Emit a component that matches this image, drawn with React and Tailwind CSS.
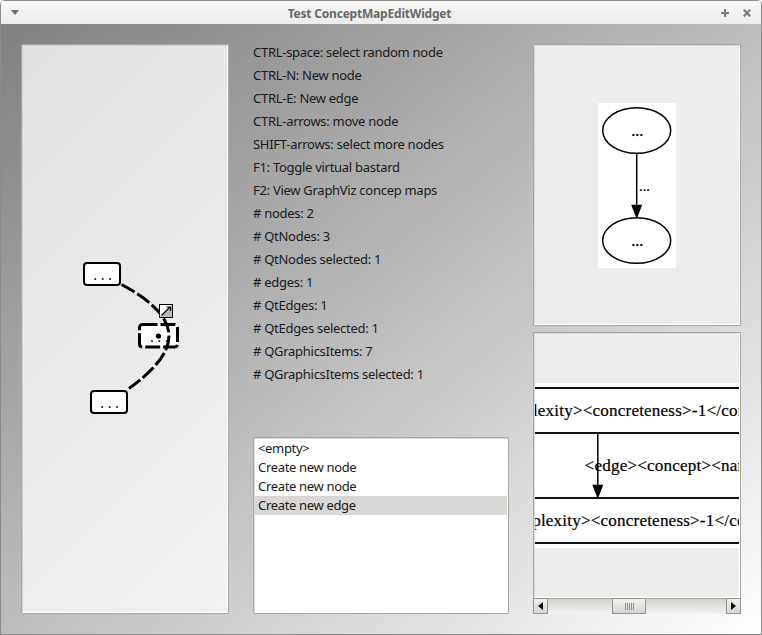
const help = [
  'CTRL-space: select random node',
  'CTRL-N: New node',
  'CTRL-E: New edge',
  'CTRL-arrows: move node',
  'SHIFT-arrows: select more nodes',
  'F1: Toggle virtual bastard',
  'F2: View GraphViz concep maps',
  '# nodes: 2',
  '# QtNodes: 3',
  '# QtNodes selected: 1',
  '# edges: 1',
  '# QtEdges: 1',
  '# QtEdges selected: 1',
  '# QGraphicsItems: 7',
  '# QGraphicsItems selected: 1',
];

const commands = ['<empty>', 'Create new node', 'Create new node', 'Create new edge'];

function TitleBar() {
  return (
    <header className="flex h-6 shrink-0 items-center justify-between border-t border-[#8c8a8a] bg-linear-to-b from-[#f8f8f7] to-[#ececeb] pr-[10px] pl-[10px]">
      <div className="flex w-[7px]">
        <svg className="shrink-0" width="8" height="5" viewBox="0 0 8 5">
          <path d="M0 0H8L4 5Z" fill="#6b6b6b" />
        </svg>
      </div>
      <h1 className="pt-[2px] text-[12px] leading-6 font-bold tracking-[-0.2px] text-[#686868]">Test ConceptMapEditWidget</h1>
      <div className="flex w-[30px] items-center justify-between">
        <svg width="8" height="8" viewBox="0 0 8 8">
          <path d="M4 0V8M0 4H8" stroke="#7c7c7c" strokeWidth="2" />
        </svg>
        <svg width="8" height="8" viewBox="0 0 8 8">
          <path d="M.7 .7L7.3 7.3M7.3 .7L.7 7.3" stroke="#7c7c7c" strokeWidth="2.2" />
        </svg>
      </div>
    </header>
  );
}

function ConceptMap() {
  return (
    <section className="h-[570px] w-[208px] rounded-[1px] border border-[#a7a8a1] bg-linear-[135deg] from-[#e2e2e2] to-[#f2f2f2] shadow-[inset_-1px_-1px_0_#fff,inset_1px_1px_0_#d2d3cb]">
      <svg width="206" height="568" viewBox="22 45 206 568">
        <g fill="#fff" stroke="#000" strokeWidth="2">
          <rect x="84" y="263" width="36" height="22" rx="3" />
          <rect x="91" y="391" width="36" height="22" rx="3" />
          <rect x="139.5" y="324.5" width="38" height="22.5" rx="3" strokeWidth="3" strokeDasharray="15 3" />
        </g>
        <g fontFamily="Liberation Mono, monospace" fontSize="12.3">
          <text x="91.6" y="280">...</text>
          <text x="98.6" y="408">...</text>
          <text x="148.2" y="342">...</text>
        </g>
        <path d="M121.5 284.5C183.5 318 183.5 349 129 388.5" fill="none" stroke="#000" strokeWidth="3" strokeDasharray="15 3.2" />
        <circle cx="158.4" cy="336" r="2.6" />
        <rect x="159.5" y="304.5" width="13" height="13" fill="#fff" stroke="#000" />
        <path d="M172 305V317H160Z" fill="#b9b9b9" />
        <path d="M161.5 315.5L170 307M166.5 307H170.5V311" fill="none" stroke="#000" strokeWidth="1.2" />
      </svg>
    </section>
  );
}

function InfoColumn() {
  return (
    <section className="flex h-[570px] w-[256px] flex-col justify-between">
      <ul className="-mt-[3px] text-[13px] leading-[23px] tracking-[-0.28px] text-[#1a1a1a]">
        {help.map((line) => (
          <li key={line} className="whitespace-nowrap">{line}</li>
        ))}
      </ul>
      <ul className="h-[177px] rounded-[1px] border border-[#a7a8a1] bg-white pt-px pr-px pl-px text-[13px] leading-[19px] tracking-[-0.33px] text-[#1a1a1a] shadow-[inset_1px_1px_0_#d8d9d2]">
        {commands.map((line, i) => (
          <li key={i} className={i === 3 ? 'bg-[#d8d7d5] pl-[3px]' : 'pl-[3px]'}>{line}</li>
        ))}
      </ul>
    </section>
  );
}

function GraphPreview() {
  return (
    <div className="flex h-[282px] rounded-[1px] border border-[#a7a8a1] bg-[#ededeb] shadow-[inset_-1px_-1px_0_#fff,inset_1px_1px_0_#d8d9d2]">
      <svg width="206" height="280" viewBox="534 45 206 280">
        <rect x="598" y="103" width="78" height="165" fill="#fff" />
        <g fill="none" stroke="#000" strokeWidth="1.5">
          <ellipse cx="636.7" cy="130.5" rx="34" ry="22.8" />
          <ellipse cx="636.7" cy="240.5" rx="34" ry="22.8" />
          <path d="M636.7 153V206" />
        </g>
        <path d="M631.2 204.8H642.2L636.7 219Z" />
        <g fontFamily="Liberation Serif, serif" fontSize="16" stroke="#000" strokeWidth="0.3">
          <text x="631.3" y="136">...</text>
          <text x="639" y="191" fontSize="14.5">...</text>
          <text x="631.3" y="246">...</text>
        </g>
      </svg>
    </div>
  );
}

function ScrollButton({ d }) {
  return (
    <div className="flex h-4 w-[15px] items-center justify-center border border-[#93938f] bg-linear-to-b from-[#f2f2f1] to-[#d5d4d2]">
      <svg width="5" height="8" viewBox="0 0 5 8">
        <path d={d} fill="#000" />
      </svg>
    </div>
  );
}

function XmlPreview() {
  return (
    <div className="flex h-[282px] flex-col">
      <div className="h-[266px] rounded-[1px] border border-b-0 border-[#a7a8a1] bg-[#ededeb] shadow-[inset_-1px_-1px_0_#fff,inset_1px_1px_0_#d8d9d2]">
        <svg className="ml-px" width="204" height="265" viewBox="535 333 204 265">
          <rect x="535" y="383" width="204" height="165" fill="#fff" />
          <path d="M535 388H739M535 433H739M535 498H739M535 543H739" stroke="#111" strokeWidth="1.8" />
          <path d="M597.8 433V486" stroke="#111" strokeWidth="1.6" />
          <path d="M592.3 484.8H603.3L597.8 499Z" />
          <g fontFamily="Liberation Serif, serif" fontSize="17.1" letterSpacing="0.18" stroke="#000" strokeWidth="0.2">
            <text x="532.9" y="416">lexity&gt;&lt;concreteness&gt;-1&lt;/con</text>
            <text x="584.6" y="471">&lt;edge&gt;&lt;concept&gt;&lt;nam</text>
            <text x="532.2" y="526">plexity&gt;&lt;concreteness&gt;-1&lt;/co</text>
          </g>
        </svg>
      </div>
      <div className="flex h-4 justify-between border-t border-[#a9aaa4] bg-linear-to-b from-[#d3d4cf] to-[#f2f2f0]">
        <div className="-mt-px"><ScrollButton d="M5 0V8L0 4Z" /></div>
        <div className="-mt-px -ml-4 flex h-4 w-[34px] items-center justify-center gap-[1px] border border-[#93938f] bg-linear-to-b from-[#f2f2f1] to-[#d5d4d2]">
          {[0, 1, 2, 3, 4].map((n) => (
            <i key={n} className="h-[7px] w-px bg-[#92928e]" />
          ))}
        </div>
        <div className="-mt-px"><ScrollButton d="M0 0V8L5 4Z" /></div>
      </div>
    </div>
  );
}

export default function App() {
  return (
    <div className="h-[635px] w-[762px] bg-white font-['Noto_Sans',sans-serif]">
      <div className="flex h-full flex-col overflow-hidden rounded-t-[5px] border-r border-b border-l border-[#8c8a8a]">
        <TitleBar />
        <main className="flex flex-1 items-start gap-6 bg-linear-to-br from-[#808080] to-white pt-5 pl-5">
          <ConceptMap />
          <InfoColumn />
          <section className="flex w-[208px] flex-col gap-[6px]">
            <GraphPreview />
            <XmlPreview />
          </section>
        </main>
      </div>
    </div>
  );
}
